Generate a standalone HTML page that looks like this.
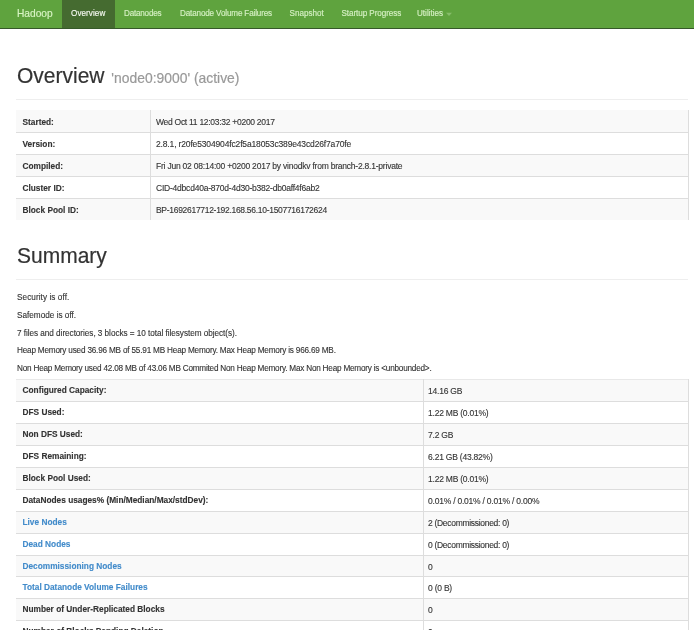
<!DOCTYPE html>
<html>
<head>
<meta charset="utf-8">
<style>
html,body{margin:0;padding:0;background:#fff;}
body{width:694px;height:630px;overflow:hidden;position:relative;font-family:"Liberation Sans",sans-serif;color:#333;}
.wrap{position:absolute;left:0;top:0;width:694px;height:630px;will-change:transform;filter:blur(0.3px);}
.abs{position:absolute;white-space:nowrap;}
.nav{position:absolute;left:0;top:0;width:694px;height:28px;background:#5fa33e;border-bottom:1px solid #36592a;}
.brand{-webkit-text-stroke:0.15px currentColor;left:17px;top:0;line-height:28px;font-size:10.2px;color:#d8f4c4;}
.tab{-webkit-text-stroke:0.15px currentColor;transform:scaleY(1.1);transform-origin:0 16px;top:0;height:28px;line-height:28px;font-size:8.1px;color:#d4efc2;}
.tab.active{background:#456b30;color:#f4f8f0;}
.caret{display:inline-block;width:0;height:0;border-left:3px solid transparent;border-right:3px solid transparent;border-top:3px solid #86bd6a;vertical-align:middle;margin-left:3px;position:relative;top:0.5px;}
.h1{transform:scaleY(1.08);transform-origin:0 19.5px;-webkit-text-stroke:0.2px currentColor;left:17px;font-size:21px;line-height:24px;color:#333;}
.h1 small{font-size:13.9px;color:#999;margin-left:1px;}
.hr{position:absolute;left:16px;width:672px;height:1px;background:#eee;}
.row{position:absolute;height:22px;}
.st{background:#f9f9f9;}
.hl{position:absolute;height:1px;background:#ddd;}
.vl{position:absolute;width:1px;background:#ddd;}
.cell{-webkit-text-stroke:0.12px currentColor;position:absolute;white-space:nowrap;font-size:8.5px;letter-spacing:-0.22px;line-height:22px;}
.k{font-weight:bold;font-size:8.3px;letter-spacing:0;}
.lnk{color:#428bca;}
.p{-webkit-text-stroke:0.12px #333;left:17px;font-size:8.2px;line-height:10px;}
</style>
</head>
<body>
<div class="wrap">
<div class="nav"></div>
<div class="abs brand">Hadoop</div>
<div class="abs" style="left:62px;top:0;width:53px;height:28px;background:#456b30;"></div>
<div class="abs tab active" style="left:71px;background:transparent;letter-spacing:0.08px;">Overview</div>
<div class="abs tab" style="left:124px;background:transparent;letter-spacing:-0.2px;">Datanodes</div>
<div class="abs tab" style="left:180px;background:transparent;letter-spacing:-0.14px;">Datanode Volume Failures</div>
<div class="abs tab" style="left:289.6px;background:transparent;letter-spacing:0px;">Snapshot</div>
<div class="abs tab" style="left:341.5px;background:transparent;letter-spacing:-0.06px;">Startup Progress</div>
<div class="abs tab" style="left:417px;background:transparent;letter-spacing:0px;">Utilities<span class="caret"></span></div>
<div class="abs h1" style="top:63.9px;">Overview <small>'node0:9000' (active)</small></div>
<div class="hr" style="top:99px;"></div>
<div class="row st" style="left:16px;top:110px;width:672px;height:22px;"></div>
<div class="row st" style="left:16px;top:154px;width:672px;height:22px;"></div>
<div class="row st" style="left:16px;top:198px;width:672px;height:22px;"></div>
<div class="hl" style="left:16px;top:132px;width:673px;"></div>
<div class="hl" style="left:16px;top:154px;width:673px;"></div>
<div class="hl" style="left:16px;top:176px;width:673px;"></div>
<div class="hl" style="left:16px;top:198px;width:673px;"></div>
<div class="vl" style="left:150px;top:110px;height:110px;"></div>
<div class="vl" style="left:688px;top:110px;height:110px;"></div>
<div class="cell k" style="left:22.5px;top:110.5px;">Started:</div>
<div class="cell" style="left:156px;top:111px;letter-spacing:-0.280px;">Wed Oct 11 12:03:32 +0200 2017</div>
<div class="cell k" style="left:22.5px;top:132.5px;">Version:</div>
<div class="cell" style="left:156px;top:133px;letter-spacing:-0.150px;">2.8.1, r20fe5304904fc2f5a18053c389e43cd26f7a70fe</div>
<div class="cell k" style="left:22.5px;top:154.5px;">Compiled:</div>
<div class="cell" style="left:156px;top:155px;">Fri Jun 02 08:14:00 +0200 2017 by vinodkv from branch-2.8.1-private</div>
<div class="cell k" style="left:22.5px;top:176.5px;">Cluster ID:</div>
<div class="cell" style="left:156px;top:177px;">CID-4dbcd40a-870d-4d30-b382-db0aff4f6ab2</div>
<div class="cell k" style="left:22.5px;top:198.5px;">Block Pool ID:</div>
<div class="cell" style="left:156px;top:199px;letter-spacing:-0.295px;">BP-1692617712-192.168.56.10-1507716172624</div>
<div class="abs h1" style="top:243.6px;">Summary</div>
<div class="hr" style="top:279px;"></div>
<div class="abs p" style="top:293px;letter-spacing:0.067px;">Security is off.</div>
<div class="abs p" style="top:311px;letter-spacing:0.007px;">Safemode is off.</div>
<div class="abs p" style="top:328.5px;letter-spacing:-0.042px;">7 files and directories, 3 blocks = 10 total filesystem object(s).</div>
<div class="abs p" style="top:346px;letter-spacing:-0.195px;">Heap Memory used 36.96 MB of 55.91 MB Heap Memory. Max Heap Memory is 966.69 MB.</div>
<div class="abs p" style="top:364px;letter-spacing:-0.216px;">Non Heap Memory used 42.08 MB of 43.06 MB Commited Non Heap Memory. Max Non Heap Memory is &lt;unbounded&gt;.</div>
<div class="row st" style="left:16px;top:379px;width:672px;height:22px;"></div>
<div class="row st" style="left:16px;top:423px;width:672px;height:22px;"></div>
<div class="row st" style="left:16px;top:467px;width:672px;height:22px;"></div>
<div class="row st" style="left:16px;top:511px;width:672px;height:22px;"></div>
<div class="row st" style="left:16px;top:555px;width:672px;height:21px;"></div>
<div class="row st" style="left:16px;top:598px;width:672px;height:22px;"></div>
<div class="hl" style="left:16px;top:379px;width:673px;background:#e8e8e8;"></div>
<div class="hl" style="left:16px;top:401px;width:673px;"></div>
<div class="hl" style="left:16px;top:423px;width:673px;"></div>
<div class="hl" style="left:16px;top:445px;width:673px;"></div>
<div class="hl" style="left:16px;top:467px;width:673px;"></div>
<div class="hl" style="left:16px;top:489px;width:673px;"></div>
<div class="hl" style="left:16px;top:511px;width:673px;"></div>
<div class="hl" style="left:16px;top:533px;width:673px;"></div>
<div class="hl" style="left:16px;top:555px;width:673px;"></div>
<div class="hl" style="left:16px;top:576px;width:673px;"></div>
<div class="hl" style="left:16px;top:598px;width:673px;"></div>
<div class="hl" style="left:16px;top:620px;width:673px;"></div>
<div class="vl" style="left:423px;top:379px;height:263px;"></div>
<div class="vl" style="left:688px;top:379px;height:263px;"></div>
<div class="cell k" style="left:22.5px;top:379.0px;">Configured Capacity:</div>
<div class="cell" style="left:428px;top:379.5px;">14.16 GB</div>
<div class="cell k" style="left:22.5px;top:401.0px;">DFS Used:</div>
<div class="cell" style="left:428px;top:401.5px;">1.22 MB (0.01%)</div>
<div class="cell k" style="left:22.5px;top:423.0px;">Non DFS Used:</div>
<div class="cell" style="left:428px;top:423.5px;">7.2 GB</div>
<div class="cell k" style="left:22.5px;top:445.0px;">DFS Remaining:</div>
<div class="cell" style="left:428px;top:445.5px;">6.21 GB (43.82%)</div>
<div class="cell k" style="left:22.5px;top:467.0px;">Block Pool Used:</div>
<div class="cell" style="left:428px;top:467.5px;">1.22 MB (0.01%)</div>
<div class="cell k" style="left:22.5px;top:489.0px;">DataNodes usages% (Min/Median/Max/stdDev):</div>
<div class="cell" style="left:428px;top:489.5px;">0.01% / 0.01% / 0.01% / 0.00%</div>
<div class="cell k" style="left:22.5px;top:511.0px;"><span class="lnk">Live Nodes</span></div>
<div class="cell" style="left:428px;top:511.5px;letter-spacing:-0.300px;">2 (Decommissioned: 0)</div>
<div class="cell k" style="left:22.5px;top:533.0px;"><span class="lnk">Dead Nodes</span></div>
<div class="cell" style="left:428px;top:533.5px;letter-spacing:-0.300px;">0 (Decommissioned: 0)</div>
<div class="cell k" style="left:22.5px;top:555.0px;"><span class="lnk">Decommissioning Nodes</span></div>
<div class="cell" style="left:428px;top:555.5px;">0</div>
<div class="cell k" style="left:22.5px;top:576.0px;"><span class="lnk">Total Datanode Volume Failures</span></div>
<div class="cell" style="left:428px;top:576.5px;">0 (0 B)</div>
<div class="cell k" style="left:22.5px;top:598.0px;">Number of Under-Replicated Blocks</div>
<div class="cell" style="left:428px;top:598.5px;">0</div>
<div class="cell k" style="left:22.5px;top:620.0px;">Number of Blocks Pending Deletion</div>
<div class="cell" style="left:428px;top:620.5px;">0</div>
</div>
</body>
</html>
